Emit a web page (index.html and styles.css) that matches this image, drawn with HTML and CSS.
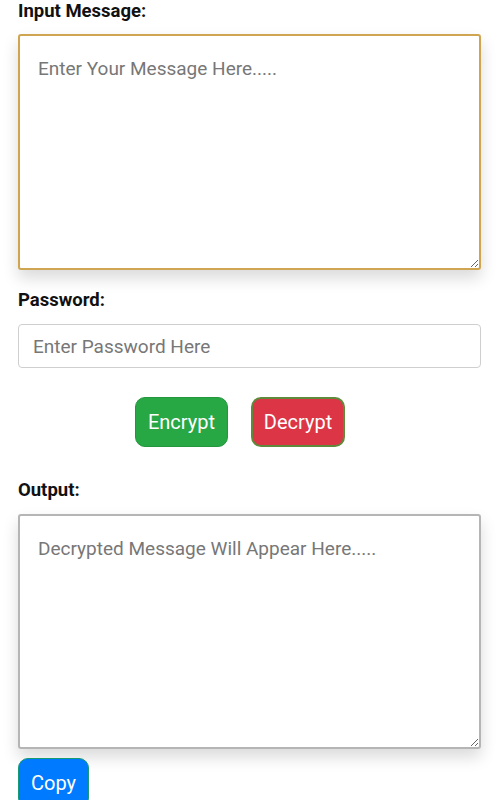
FILE: index.html
```html
<!DOCTYPE html>
<html lang="en">
<head>
  <meta charset="UTF-8" />
  <meta name="viewport" content="width=device-width, initial-scale=1.0" />
  <title>Encrypt / Decrypt</title>
  <link rel="stylesheet" href="styles.css">
</head>
<body>
  <div class="container">
    <label for="message" class="label first">Input Message:</label>
    <textarea id="message" class="box input-box" placeholder="Enter Your Message Here....."></textarea>

    <label for="password" class="label">Password:</label>
    <input type="password" id="password" class="pass" placeholder="Enter Password Here" />

    <div class="buttons">
      <button id="encrypt" class="btn encrypt">Encrypt</button>
      <button id="decrypt" class="btn decrypt">Decrypt</button>
    </div>

    <label for="output" class="label">Output:</label>
    <textarea id="output" class="box output-box" placeholder="Decrypted Message Will Appear Here....." readonly></textarea>

    <button id="copy" class="btn copy">Copy</button>
  </div>
</body>
</html>
```

FILE: styles.css
```css
* {
  box-sizing: border-box;
}

body {
  margin: 0;
  font-family: Roboto, "Liberation Sans", sans-serif;
  background-color: #fff;
  color: #111;
}

.container {
  display: flex;
  flex-direction: column;
  align-items: flex-start;
  padding: 0 17px 0 18px;
}

.label {
  display: block;
  font-size: 18.5px;
  font-weight: bold;
  line-height: 22px;
  margin-top: 19px;
  margin-bottom: 13px;
}

.label.first {
  margin-top: 0;
  margin-bottom: 12px;
}

.box {
  width: 100%;
  resize: vertical;
  padding: 21px 18px;
  font-family: inherit;
  font-size: 19px;
  color: #333;
  background-color: #fff;
  border-radius: 3px;
  box-shadow: 0 8px 16px rgba(0, 0, 0, 0.15);
}

.box::placeholder {
  color: #777;
}

.input-box {
  height: 236px;
  border: 2px solid #cfa552;
}

.output-box {
  height: 235px;
  border: 2px solid #b5b5b5;
}

.pass {
  width: 100%;
  height: 44px;
  padding: 0 14px;
  font-family: inherit;
  font-size: 19px;
  border: 1px solid #cfcfcf;
  border-radius: 4px;
}

.pass::placeholder {
  color: #777;
}

.buttons {
  display: flex;
  gap: 23px;
  margin: 29px 0 13px 117px;
}

.btn {
  height: 50px;
  padding: 0 10px;
  font-family: inherit;
  font-size: 20px;
  color: #fff;
  border-radius: 10px;
  cursor: pointer;
}

.encrypt {
  width: 93px;
  background-color: #28a745;
  border: 1px solid #23963e;
}

.decrypt {
  width: 94px;
  background-color: #dc3545;
  border: 2px solid #5f8a3c;
}

.copy {
  width: 71px;
  margin-top: 9px;
  background-color: #007bff;
  border: 1px solid #159a72;
}
```
